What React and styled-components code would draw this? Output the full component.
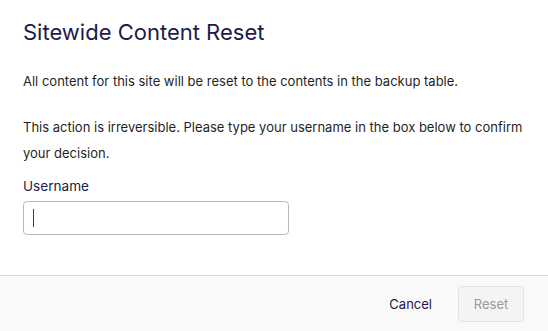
import styled, { createGlobalStyle } from 'styled-components';

const GlobalStyle = createGlobalStyle`
  html, body {
    margin: 0;
    padding: 0;
    background: #fff;
    font-family: Inter, "Liberation Sans", sans-serif;
  }
`

export default function App() {
  return <>
    <GlobalStyle />
    <Modal>
      <Body>
        <Title>Sitewide Content Reset</Title>
        <Text>All content for this site will be reset to the contents in the backup table.</Text>
        <Text>This action is irreversible. Please type your username in the box below to confirm your decision.</Text>
        <Label htmlFor="username">Username</Label>
        <Field>
          <Input id="username" type="text" />
          <Caret />
        </Field>
      </Body>
      <Footer>
        <TextButton>Cancel</TextButton>
        <ResetButton disabled>Reset</ResetButton>
      </Footer>
    </Modal>
  </>
}

const Modal = styled.div`
  display: flex;
  flex-direction: column;
  height: 100vh;
  background: #fff;
`

const Body = styled.div`
  flex: 1;
  padding: 16px 23px 0;
`

const Title = styled.h1`
  margin: 0 0 20px;
  font-size: 22px;
  line-height: 32px;
  font-weight: 400;
  color: #1c1b4a;
`

const Text = styled.p`
  margin: 0 0 20px;
  font-size: 13px;
  line-height: 26px;
  color: #1f1f1f;
  max-width: 500px;
`

const Label = styled.label`
  display: block;
  margin-top: -10px;
  font-size: 13.6px;
  line-height: 20px;
  color: #1c1b4a;
`

const Field = styled.div`
  position: relative;
  width: 266px;
  margin-top: 5px;
`

const Input = styled.input`
  box-sizing: border-box;
  width: 266px;
  height: 34px;
  border: 1px solid #b9b9b9;
  border-radius: 4px;
  padding: 0 10px;
  font: inherit;
  outline: none;
`

const Caret = styled.span`
  position: absolute;
  left: 10px;
  top: 8px;
  width: 1px;
  height: 18px;
  background: #3a3960;
`

const Footer = styled.div`
  display: flex;
  align-items: center;
  justify-content: flex-end;
  gap: 14px;
  height: 55px;
  padding: 0 24px;
  background: #f9f9f9;
  border-top: 1px solid #d9d9d9;
`

const TextButton = styled.button`
  border: none;
  background: none;
  padding: 0 12px;
  font-family: inherit;
  font-size: 13px;
  color: #1c1b4a;
  cursor: pointer;
`

const ResetButton = styled.button`
  box-sizing: border-box;
  width: 66px;
  height: 36px;
  border: 1px solid #e2e2e2;
  border-radius: 4px;
  background: #f4f4f4;
  font-family: inherit;
  font-size: 13px;
  color: #9a9a9a;
`
